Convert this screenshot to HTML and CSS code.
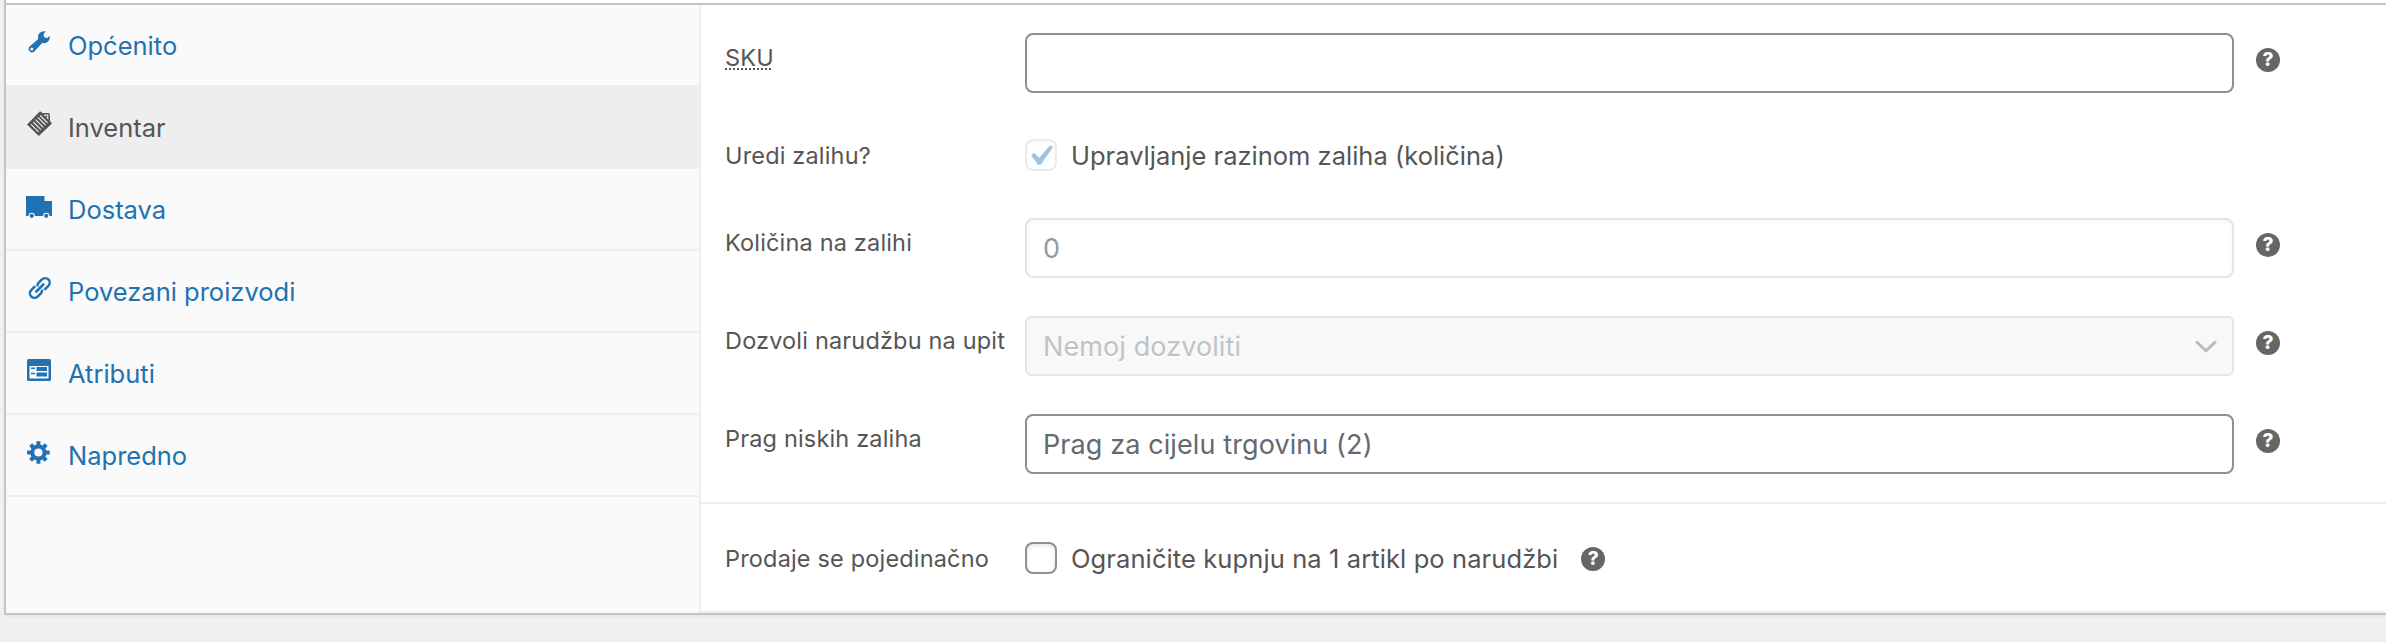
FILE: index.html
```html
<!DOCTYPE html>
<html lang="hr">
<head>
    <meta charset="UTF-8">
    <meta name="viewport" content="width=device-width, initial-scale=1.0">
    <title>Podaci o proizvodu</title>
    <link rel="stylesheet" href="styles.css">
</head>
<body>
<div class="postbox">
    <div class="panel-wrap">
        <ul class="tabs">
            <li>
                <a href="#opcenito">
                    <svg class="tab-icon" viewBox="0 0 28 28"><path fill-rule="evenodd" d="M19.6 3.5C15 2 11 6.200 12.300 11L3.500 18.600A3.400 3.400 0 0 0 8.300 23.400L16.200 14.900C20.500 16.200 24.300 12.800 23.800 8L20.800 10.300L18 9L17.500 6ZM5.800 19.500a1.500 1.500 0 1 0 0 3a1.500 1.500 0 1 0 0-3Z"/></svg>
                    <span>Općenito</span>
                </a>
            </li>
            <li class="active">
                <a href="#inventar">
                    <svg class="tab-icon" viewBox="0 0 28 28">
                        <path d="M1 14.500L14 1.200L16.500 3H23L24 5V11L26 13.500L12.800 26Z"/>
                        <path class="cut" d="M17.500 4.500H22.300V9.800Z"/>
                        <circle cx="20.300" cy="6.600" r="1.100"/>
                        <path class="lines" d="M5 14.300l7.600 7.600M7.300 12l7.600 7.600M9.600 9.700l7.600 7.600M11.900 7.400l7.600 7.600M14.200 5.500l7.300 7.300"/>
                    </svg>
                    <span>Inventar</span>
                </a>
            </li>
            <li>
                <a href="#dostava">
                    <svg class="tab-icon" viewBox="0 0 28 28">
                        <path d="M0 4H18.500V9H26V24H0Z"/>
                        <path class="cut" d="M2.500 24a3.200 3.200 0 0 1 6.400 0zM17 24a3.200 3.200 0 0 1 6.400 0z"/>
                        <circle cx="5.700" cy="23.800" r="2.100"/>
                        <circle cx="20.200" cy="23.800" r="2.100"/>
                    </svg>
                    <span>Dostava</span>
                </a>
            </li>
            <li>
                <a href="#povezani">
                    <svg class="tab-icon" viewBox="0 0 28 28">
                        <g class="chain" transform="translate(13.800 14) rotate(-45)">
                            <path d="M-2 -4.500H-7.600a4.500 4.500 0 0 0 0 9H-3a4.500 4.500 0 0 0 3.500-1.800"/>
                            <path d="M2 4.500H7.600a4.500 4.500 0 0 0 0-9H3a4.500 4.500 0 0 0-3.500 1.800"/>
                            <path d="M-6 0H6"/>
                        </g>
                    </svg>
                    <span>Povezani proizvodi</span>
                </a>
            </li>
            <li>
                <a href="#atributi">
                    <svg class="tab-icon" viewBox="0 0 28 28">
                        <rect x="1" y="3" width="24" height="22" rx="1.500"/>
                        <path class="cut" d="M3.500 10H22.500V22.500H3.500Z"/>
                        <path d="M5 11.500h4v1.500h-4zM5 16.700h4v1.500h-4zM10.500 11h10.500v4h-10.500zM10.500 16.500h10.500v4h-10.500z"/>
                    </svg>
                    <span>Atributi</span>
                </a>
            </li>
            <li>
                <a href="#napredno">
                    <svg class="tab-icon" viewBox="0 0 28 28">
                        <g class="gear" transform="translate(12.400 14.500)">
                            <circle r="6.100"/>
                            <path d="M0 -7V-11.300M0 7V11.300M-7 0H-11.300M7 0H11.300M-5 -5L-7.800 -7.800M5 5L7.800 7.800M-5 5L-7.800 7.800M5 -5L7.800 -7.800"/>
                        </g>
                    </svg>
                    <span>Napredno</span>
                </a>
            </li>
        </ul>

        <form class="options-panel">
            <div class="options-group">
                <div class="form-field">
                    <label class="field-label" for="sku"><abbr title="Stock Keeping Unit">SKU</abbr></label>
                    <input class="text-input" type="text" id="sku">
                    <span class="help-tip">?</span>
                </div>
                <div class="form-field check-field">
                    <label class="field-label" for="manage-stock">Uredi zalihu?</label>
                    <span class="checkbox disabled">
                        <input type="checkbox" id="manage-stock" checked disabled>
                        <svg class="check-mark" viewBox="0 0 20 20"><path d="M14.830 4.890l1.340.940-5.810 8.380H9.020L5.780 9.670l1.340-1.250 2.570 2.400z"/></svg>
                    </span>
                    <span class="description">Upravljanje razinom zaliha (količina)</span>
                </div>
                <div class="form-field">
                    <label class="field-label" for="stock">Količina na zalihi</label>
                    <input class="text-input disabled" type="text" id="stock" value="0" disabled>
                    <span class="help-tip">?</span>
                </div>
                <div class="form-field">
                    <label class="field-label" for="backorders">Dozvoli narudžbu na upit</label>
                    <div class="select-wrap">
                        <select class="select-input" id="backorders" disabled>
                            <option>Nemoj dozvoliti</option>
                        </select>
                        <svg class="select-arrow" viewBox="0 0 22 13"><path d="M1.200 1.500L11 10.800L20.800 1.500"/></svg>
                    </div>
                    <span class="help-tip">?</span>
                </div>
                <div class="form-field">
                    <label class="field-label" for="low-stock">Prag niskih zaliha</label>
                    <input class="text-input" type="text" id="low-stock" placeholder="Prag za cijelu trgovinu (2)">
                    <span class="help-tip">?</span>
                </div>
            </div>

            <div class="options-group">
                <div class="form-field check-field">
                    <label class="field-label" for="sold-individually">Prodaje se pojedinačno</label>
                    <span class="checkbox">
                        <input type="checkbox" id="sold-individually">
                    </span>
                    <span class="description wide">Ograničite kupnju na 1 artikl po narudžbi</span>
                    <span class="help-tip">?</span>
                </div>
            </div>
        </form>
    </div>
</div>
</body>
</html>
```
FILE: styles.css
```css
* {
    box-sizing: border-box;
}

body {
    margin: 0;
    height: 642px;
    padding-left: 4px;
    background: #f0f0f0;
    color: #555;
    font-family: Inter, "Liberation Sans", sans-serif;
    overflow: hidden;
}

.postbox {
    height: 615px;
    padding-top: 3px;
    background: #fff;
    border-left: 2px solid #c3c4c7;
    border-bottom: 2px solid #c3c4c7;
    box-shadow: 0 2px 2px rgba(0, 0, 0, 0.04);
}

.panel-wrap {
    display: flex;
    height: 610px;
    border-top: 2px solid #c3c4c7;
}

/* Tabs */
.tabs {
    width: 695px;
    margin: 0;
    padding: 0;
    list-style: none;
    background: #fafafa;
    border-right: 2px solid #eee;
}

.tabs a {
    display: flex;
    height: 82px;
    padding: 23px 20px 0;
    border-bottom: 2px solid #eee;
    color: #2271b1;
    font-size: 25.5px;
    line-height: 36px;
    text-decoration: none;
}

.tabs .active a {
    background: #eee;
    color: #555;
}

.tab-icon {
    width: 28px;
    height: 28px;
    margin-right: 14px;
    fill: currentColor;
}

.cut {
    fill: #fafafa;
}

.active .cut {
    fill: #eee;
}

.lines {
    fill: none;
    stroke: #eee;
    stroke-width: 1.1;
}

.chain,
.gear {
    fill: none;
    stroke: currentColor;
    stroke-width: 2.5;
}

.gear {
    stroke-width: 4;
}

/* Fields */
.options-panel {
    flex: 1;
}

.options-group {
    padding: 28px 24px;
    border-bottom: 2px solid #eee;
    display: flex;
    flex-direction: column;
    gap: 38px;
}

.options-group + .options-group {
    height: 109px;
    padding-top: 30px;
}

.form-field {
    display: flex;
    align-items: flex-start;
    height: 60px;
}

.check-field {
    height: 49px;
}

.field-label {
    width: 300px;
    font-size: 23.5px;
    letter-spacing: 0.17px;
    line-height: 50px;
    white-space: nowrap;
}

.field-label abbr {
    text-decoration: underline dotted 2px;
    text-underline-offset: 2px;
    text-decoration-skip-ink: none;
}

.text-input,
.select-input {
    width: 1209px;
    height: 60px;
    padding: 0 16px;
    background: #fff;
    border: 2px solid #8c8f94;
    border-radius: 8px;
    color: #2c3338;
    font-family: inherit;
    font-size: 27px;
    letter-spacing: 0.1px;
}

.text-input::placeholder {
    color: #646970;
    opacity: 1;
}

.text-input.disabled {
    border-color: #e4e4e5;
    color: #96999c;
    box-shadow: inset 0 2px 4px rgba(0, 0, 0, 0.04);
}

.select-wrap {
    position: relative;
}

.select-input {
    display: block;
    appearance: none;
    background: #f8f8f8;
    border-color: #e4e4e5;
    border-radius: 6px;
    color: #c0c3c7;
    opacity: 1;
    text-shadow: 0 2px 0 #fff;
}

.select-arrow {
    position: absolute;
    top: 24px;
    right: 17px;
    width: 22px;
    height: 13px;
    fill: none;
    stroke: #b9bbbe;
    stroke-width: 3;
}

.checkbox {
    position: relative;
    width: 32px;
    height: 32px;
    margin-top: 8px;
}

.checkbox input {
    display: block;
    appearance: none;
    width: 32px;
    height: 32px;
    margin: 0;
    background: #fff;
    border: 2px solid #8c8f94;
    border-radius: 8px;
    box-shadow: inset 0 2px 4px rgba(0, 0, 0, 0.1);
}

.checkbox.disabled input {
    border-color: #ebebec;
    box-shadow: inset 0 2px 4px rgba(0, 0, 0, 0.04);
}

.check-mark {
    position: absolute;
    top: -4px;
    left: -6px;
    width: 42px;
    height: 42px;
    fill: #9ec2e3;
}

.description {
    margin-left: 14px;
    font-size: 25.5px;
    line-height: 50px;
    white-space: nowrap;
}

.description.wide {
    letter-spacing: 0.1px;
}

.help-tip {
    width: 24px;
    height: 24px;
    margin: 15px 0 0 22px;
    border-radius: 50%;
    background: #666;
    color: #fff;
    font-size: 19px;
    font-weight: 800;
    line-height: 24px;
    text-align: center;
}

.check-field .help-tip {
    margin: 13px 0 0 23px;
}
```
